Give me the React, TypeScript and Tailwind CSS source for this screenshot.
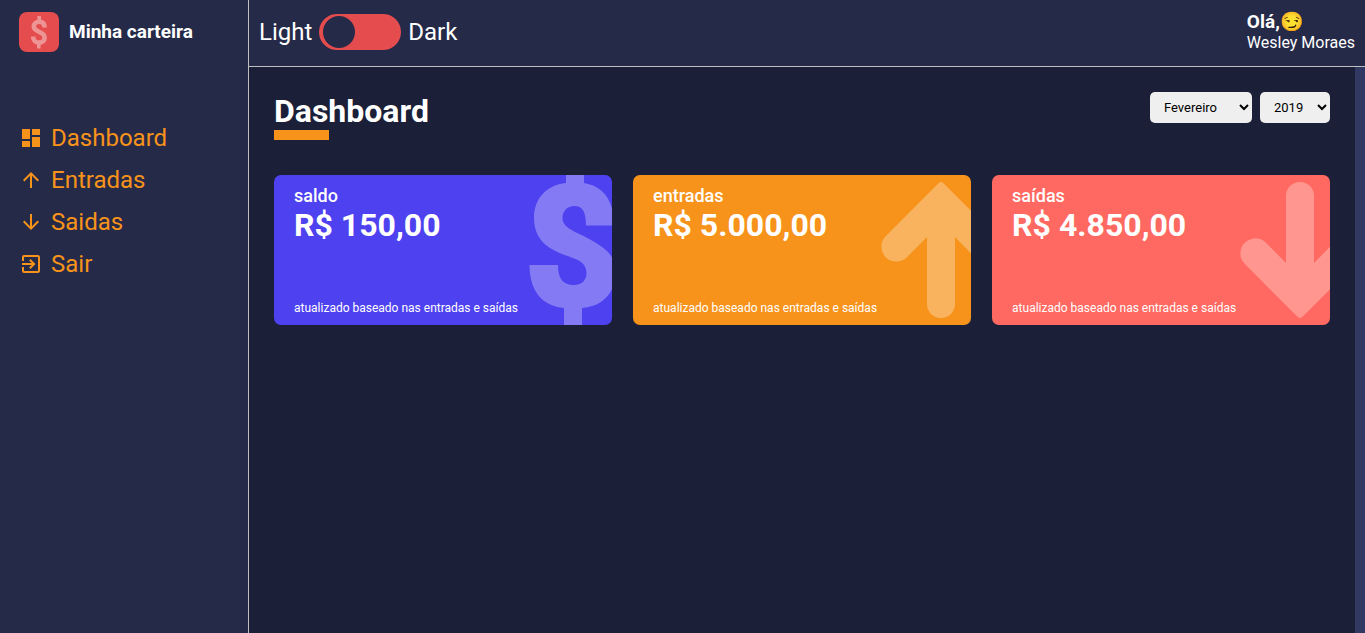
import { useState } from 'react';
import type { ReactNode } from 'react';
import { MdArrowDownward, MdArrowUpward, MdDashboard, MdExitToApp } from 'react-icons/md';

const ARROW_PATH =
  'M57.5 1.2Q60-1 62.5 1.2L115.6 54.4A15 15 0 0 1 94.4 75.6L74 55V122A14 14 0 0 1 46 122V55L25.6 75.6A15 15 0 0 1 4.4 54.4Z';

const MENU = [
  { label: 'Dashboard', icon: MdDashboard },
  { label: 'Entradas', icon: MdArrowUpward },
  { label: 'Saidas', icon: MdArrowDownward },
  { label: 'Sair', icon: MdExitToApp },
];

const MONTHS = [
  'Janeiro', 'Fevereiro', 'Março', 'Abril', 'Maio', 'Junho',
  'Julho', 'Agosto', 'Setembro', 'Outubro', 'Novembro', 'Dezembro',
];

function Logo() {
  return (
    <svg aria-hidden="true" viewBox="0 0 40 40" className="size-10" fill="none">
      <rect width="40" height="40" rx="8" fill="#e44c4e" />
      <g stroke="#fff" opacity="0.4">
        <path
          strokeWidth="4.6"
          d="M25.6 15.6C25.6 11.8 23.6 9.8 20.2 9.8C16.9 9.8 14.8 11.7 14.8 14.6C14.8 20.8 25.6 18.8 25.6 25.4C25.6 28.6 23.3 30.6 19.9 30.6C16.3 30.6 14.2 28.4 14.2 24.6"
        />
        <path strokeWidth="3.6" d="M20.2 4V8.5M19.8 32V36.6" />
      </g>
    </svg>
  );
}

function Sidebar() {
  return (
    <aside className="w-[249px] shrink-0 border-r border-[#bfbfbf] bg-[#252a48] pl-[19px]">
      <div className="flex h-16 items-center gap-2.5">
        <Logo />
        <h3 className="text-[19px] font-bold text-white">Minha carteira</h3>
      </div>
      <nav className="mt-[60px] flex flex-col items-start gap-3.5">
        {MENU.map(({ label, icon: Icon }) => (
          <a
            key={label}
            href="#"
            className="flex items-center gap-2 text-2xl leading-7 text-[#f7931b] hover:opacity-70"
          >
            <Icon aria-hidden="true" />
            {label}
          </a>
        ))}
      </nav>
    </aside>
  );
}

function Header() {
  const [dark, setDark] = useState(false);
  return (
    <header className="flex h-[67px] items-center justify-between border-b border-[#bfbfbf] bg-[#252a48] px-2.5 pb-0.5 text-white">
      <label className="flex items-center gap-[7px] text-2xl">
        <span>Light</span>
        <input
          type="checkbox"
          role="switch"
          aria-label="Dark"
          checked={dark}
          onChange={(e) => setDark(e.target.checked)}
          className="flex h-9 w-[82px] cursor-pointer appearance-none items-center rounded-full bg-[#e44c4e] px-1 before:size-8 before:rounded-full before:bg-[#252a48] checked:justify-end"
        />
        <span>Dark</span>
      </label>
      <div>
        <h3 className="mb-px text-[19px] leading-5 font-bold">Olá,😏</h3>
        <p className="text-base leading-5">Wesley Moraes</p>
      </div>
    </header>
  );
}

type CardProps = { title: string; amount: string; color: string; children: ReactNode };

function WalletCard({ title, amount, color, children }: CardProps) {
  return (
    <article
      className={`relative flex h-[150px] w-[32%] flex-col overflow-hidden rounded-[7px] px-5 py-2.5 text-white ${color}`}
    >
      {children}
      <h2 className="text-lg leading-[21px] font-medium">{title}</h2>
      <strong className="text-[32px] leading-[38px] font-bold">{amount}</strong>
      <small className="mt-auto text-xs leading-[14px]">atualizado baseado nas entradas e saídas</small>
    </article>
  );
}

function Dollar() {
  return (
    <svg
      aria-hidden="true"
      viewBox="0 0 88 150"
      className="absolute top-0 -right-[5px] h-[150px] w-[88px] fill-white/30"
    >
      <path d="M37 0H55V8C74 11 85 25 85 50.5H57C57 38 54 31 45.5 31C38 31 33.5 36 33.5 43C33.5 57 58 58 78 76C84 82 86.5 89 86.5 97C86.5 118 74 131 53 133V150H35V133C14 131 0.5 117 0.5 90H29C29 104 34 110 45 110C53 110 57.5 105 57.5 98C57.5 82 38 84 21 73C10 66 5 56 5 43C5 24 17 10 37 8Z" />
    </svg>
  );
}

function Arrow({ down = false }: { down?: boolean }) {
  return (
    <svg
      aria-hidden="true"
      viewBox="0 0 120 136"
      className="absolute top-[7px] -right-[30px] h-[136px] w-[120px] fill-white/30"
    >
      <path d={ARROW_PATH} transform={down ? 'matrix(1 0 0 -1 0 136)' : undefined} />
    </svg>
  );
}

const SELECT = 'h-[31px] rounded-[5px] bg-[#efefef] px-2.5 text-[13px] text-black';

export default function App() {
  const [month, setMonth] = useState('Fevereiro');
  const [year, setYear] = useState('2019');
  return (
    <div className="flex min-h-screen bg-[#1b1f38] font-['Roboto',sans-serif]">
      <Sidebar />
      <div className="flex min-w-0 flex-1 flex-col">
        <Header />
        <main className="flex-1 border-r-10 border-[#313862] p-[25px]">
          <div className="mb-[35px] flex items-start justify-between">
            <h1 className="text-[32px] leading-[38px] font-bold text-white after:block after:w-[55px] after:border-b-10 after:border-[#f7931b]">
              Dashboard
            </h1>
            <div className="flex gap-2">
              <select
                aria-label="Mês"
                value={month}
                onChange={(e) => setMonth(e.target.value)}
                className={`w-[102px] ${SELECT}`}
              >
                {MONTHS.map((m) => (
                  <option key={m}>{m}</option>
                ))}
              </select>
              <select aria-label="Ano" value={year} onChange={(e) => setYear(e.target.value)} className={SELECT}>
                {['2018', '2019', '2020'].map((y) => (
                  <option key={y}>{y}</option>
                ))}
              </select>
            </div>
          </div>
          <section className="flex justify-between">
            <WalletCard title="saldo" amount="R$ 150,00" color="bg-[#4e41f0]">
              <Dollar />
            </WalletCard>
            <WalletCard title="entradas" amount="R$ 5.000,00" color="bg-[#f7931b]">
              <Arrow />
            </WalletCard>
            <WalletCard title="saídas" amount="R$ 4.850,00" color="bg-[#ff6961]">
              <Arrow down />
            </WalletCard>
          </section>
        </main>
      </div>
    </div>
  );
}
